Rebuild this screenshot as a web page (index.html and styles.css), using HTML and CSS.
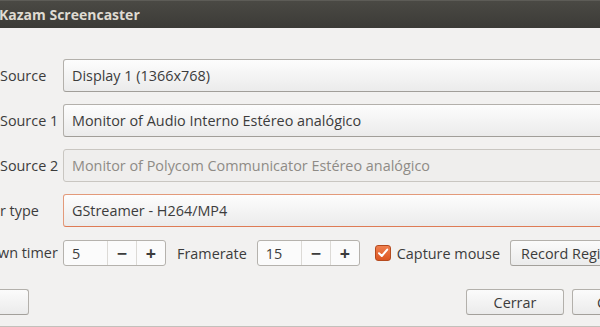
FILE: index.html
```html
<!DOCTYPE html>
<html>
<head>
<meta charset="utf-8">
<link rel="stylesheet" href="styles.css">
</head>
<body>
<div class="window">
  <div class="titlebar"><span class="title">Kazam Screencaster</span></div>
  <div class="content">
    <div class="form">
      <div class="label">Source</div>
      <div class="combo">Display 1 (1366x768)</div>
      <div class="label">Source 1</div>
      <div class="combo">Monitor of Audio Interno Estéreo analógico</div>
      <div class="label">Source 2</div>
      <div class="combo disabled">Monitor of Polycom Communicator Estéreo analógico</div>
      <div class="label">r type</div>
      <div class="combo focus">GStreamer - H264/MP4</div>
      <div class="label cut">wn timer</div>
      <div class="options">
        <div class="spin">
          <span class="spin-entry">5</span>
          <span class="spin-btn">&#8722;</span>
          <span class="spin-btn">+</span>
        </div>
        <span class="opt-label">Framerate</span>
        <div class="spin">
          <span class="spin-entry">15</span>
          <span class="spin-btn">&#8722;</span>
          <span class="spin-btn">+</span>
        </div>
        <label class="check">
          <span class="box"><svg width="12" height="12" viewBox="0 0 12 12"><path d="M2 6.2 L4.8 9 L10.2 2.6" fill="none" stroke="#fff" stroke-width="2" stroke-linecap="round" stroke-linejoin="round"/></svg></span>
          <span>Capture mouse</span>
        </label>
        <div class="button region">Record Region</div>
      </div>
    </div>
    <div class="actions">
      <div class="button left"></div>
      <div class="spacer"></div>
      <div class="button close">Cerrar</div>
      <div class="button capture">Capturar</div>
    </div>
  </div>
  <div class="bottomline"></div>
</div>
</body>
</html>
```

FILE: styles.css
```css
html, body {
  margin: 0;
  padding: 0;
  overflow: hidden;
  width: 600px;
  height: 327px;
  background: #f2f1f0;
}
.window {
  width: 680px;
  font-family: "Open Sans", "Noto Sans", sans-serif;
  font-size: 14.4px;
  color: #3c3c3c;
}
.titlebar {
  height: 28px;
  background: linear-gradient(#4a4944, #3c3b37);
  border-top: 1px solid #5d5c57;
  box-sizing: border-box;
  display: flex;
  align-items: center;
}
.title {
  margin-left: -1px;
  font-weight: bold;
  color: #dfdbd2;
  font-size: 14px;
}
.content {
  padding-top: 31px;
}
.form {
  display: grid;
  grid-template-columns: 63px 1fr;
  row-gap: 12px;
  align-items: center;
}
.label {
  white-space: nowrap;
}
.label.cut {
  margin-left: -2px;
}
.combo {
  height: 33px;
  box-sizing: border-box;
  border: 1px solid #b3b0ab;
  border-bottom-color: #a19e99;
  border-radius: 3px;
  background: linear-gradient(#fdfdfd, #ebebeb);
  padding-left: 8px;
  display: flex;
  align-items: center;
  white-space: nowrap;
}
.combo.disabled {
  background: #efeeed;
  border-color: #c9c6c1;
  color: #8e8b86;
}
.combo.focus {
  border-color: #e39a7a;
  border-bottom-color: #de7b55;
}
.options {
  display: flex;
  align-items: center;
  margin-top: 1px;
}
.spin {
  display: flex;
  height: 26px;
  box-sizing: border-box;
  border: 1px solid #b5b2ad;
  border-radius: 3px;
  background: #fbfbfb;
}
.spin-entry {
  width: 43px;
  padding-left: 8px;
  box-sizing: border-box;
  display: flex;
  align-items: center;
}
.spin-btn {
  width: 29px;
  border-left: 1px solid #dcdad6;
  box-sizing: border-box;
  display: flex;
  align-items: center;
  justify-content: center;
  font-size: 18px;
  font-weight: bold;
  color: #3c3c3c;
}
.opt-label {
  margin: 0 10px 0 11px;
}
.check {
  display: flex;
  align-items: center;
  margin-left: 15px;
}
.box {
  width: 16px;
  height: 16px;
  box-sizing: border-box;
  border: 1px solid #b54a1e;
  border-radius: 3px;
  background: linear-gradient(#f0804f, #dc5521);
  display: flex;
  align-items: center;
  justify-content: center;
  margin-right: 6px;
}
.button {
  height: 26px;
  box-sizing: border-box;
  border: 1px solid #b3b0ab;
  border-bottom-color: #a3a09b;
  border-radius: 3px;
  background: linear-gradient(#fbfbfb, #ebebeb);
  display: flex;
  align-items: center;
  white-space: nowrap;
}
.region {
  margin-left: 10px;
  padding-left: 10px;
  width: 110px;
}
.actions {
  display: flex;
  margin-top: 23px;
}
.left {
  width: 60px;
  margin-left: -31px;
}
.spacer {
  width: 437px;
}
.close {
  width: 98px;
  justify-content: center;
}
.capture {
  width: 100px;
  margin-left: 8px;
  padding-left: 24px;
}
.bottomline {
  margin-top: 11px;
  height: 1px;
  background: #c3c0bb;
}
```
